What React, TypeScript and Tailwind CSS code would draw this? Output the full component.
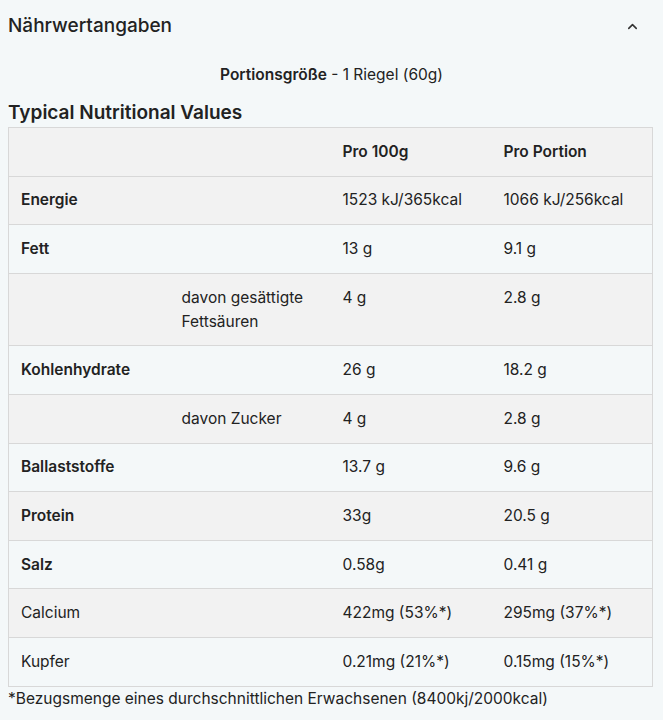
import React from 'react'
import { ChevronUp } from 'lucide-react'

type Row = {
	name: string
	sub?: string
	per100: string
	perPortion: string
	bold?: boolean
}

const rows: Row[] = [
	{ name: 'Energie', per100: '1523 kJ/365kcal', perPortion: '1066 kJ/256kcal', bold: true },
	{ name: 'Fett', per100: '13 g', perPortion: '9.1 g', bold: true },
	{ name: '', sub: 'davon gesättigte Fettsäuren', per100: '4 g', perPortion: '2.8 g' },
	{ name: 'Kohlenhydrate', per100: '26 g', perPortion: '18.2 g', bold: true },
	{ name: '', sub: 'davon Zucker', per100: '4 g', perPortion: '2.8 g' },
	{ name: 'Ballaststoffe', per100: '13.7 g', perPortion: '9.6 g', bold: true },
	{ name: 'Protein', per100: '33g', perPortion: '20.5 g', bold: true },
	{ name: 'Salz', per100: '0.58g', perPortion: '0.41 g', bold: true },
	{ name: 'Calcium', per100: '422mg (53%*)', perPortion: '295mg (37%*)' },
	{ name: 'Kupfer', per100: '0.21mg (21%*)', perPortion: '0.15mg (15%*)' },
]

const App = () => {
	return (
		<div
			className="w-full min-h-screen bg-[#f4f8f9] text-[#222] text-[15.5px]"
			style={{ fontFamily: 'Inter, "Noto Sans", sans-serif' }}
		>
			<div className="flex items-center justify-between px-2 pt-[11px] h-[41px]">
				<h2 className="text-[19px] font-medium leading-7">Nährwertangaben</h2>
				<ChevronUp size={15} strokeWidth={2.5} className="mr-[15px] text-[#333]" />
			</div>
			<div className="text-center leading-6 mt-[22px]">
				<span className="font-semibold">Portionsgröße</span> - 1 Riegel (60g)
			</div>
			<h3 className="px-2 mt-[14px] text-[19px] font-semibold leading-6">Typical Nutritional Values</h3>
			<table className="ml-2 mt-[2px] w-[644px] table-fixed border-collapse border border-[#d8d8d8]">
				<thead>
					<tr className="bg-[#f2f2f2] border-b border-[#d8d8d8]">
						<th className="w-[161px] px-3 py-[11.8px] leading-6 text-left font-semibold"></th>
						<th className="w-[161px] px-3 py-[11.8px] leading-6 text-left font-semibold"></th>
						<th className="w-[161px] px-3 py-[11.8px] leading-6 text-left font-semibold">Pro 100g</th>
						<th className="w-[161px] px-3 py-[11.8px] leading-6 text-left font-semibold">Pro Portion</th>
					</tr>
				</thead>
				<tbody>
					{rows.map((r, i) => (
						<tr
							key={i}
							className={`border-b border-[#d8d8d8] ${i % 2 === 0 ? 'bg-[#f2f2f2]' : 'bg-[#f4f8f9]'}`}
						>
							<td className={`px-3 py-[11.8px] leading-6 align-top ${r.bold ? 'font-semibold' : ''}`}>{r.name}</td>
							<td className="px-3 py-[11.8px] leading-6 align-top">{r.sub}</td>
							<td className="px-3 py-[11.8px] leading-6 align-top">{r.per100}</td>
							<td className="px-3 py-[11.8px] leading-6 align-top">{r.perPortion}</td>
						</tr>
					))}
				</tbody>
			</table>
			<p className="px-2 leading-6">*Bezugsmenge eines durchschnittlichen Erwachsenen (8400kj/2000kcal)</p>
		</div>
	)
}

export default App
